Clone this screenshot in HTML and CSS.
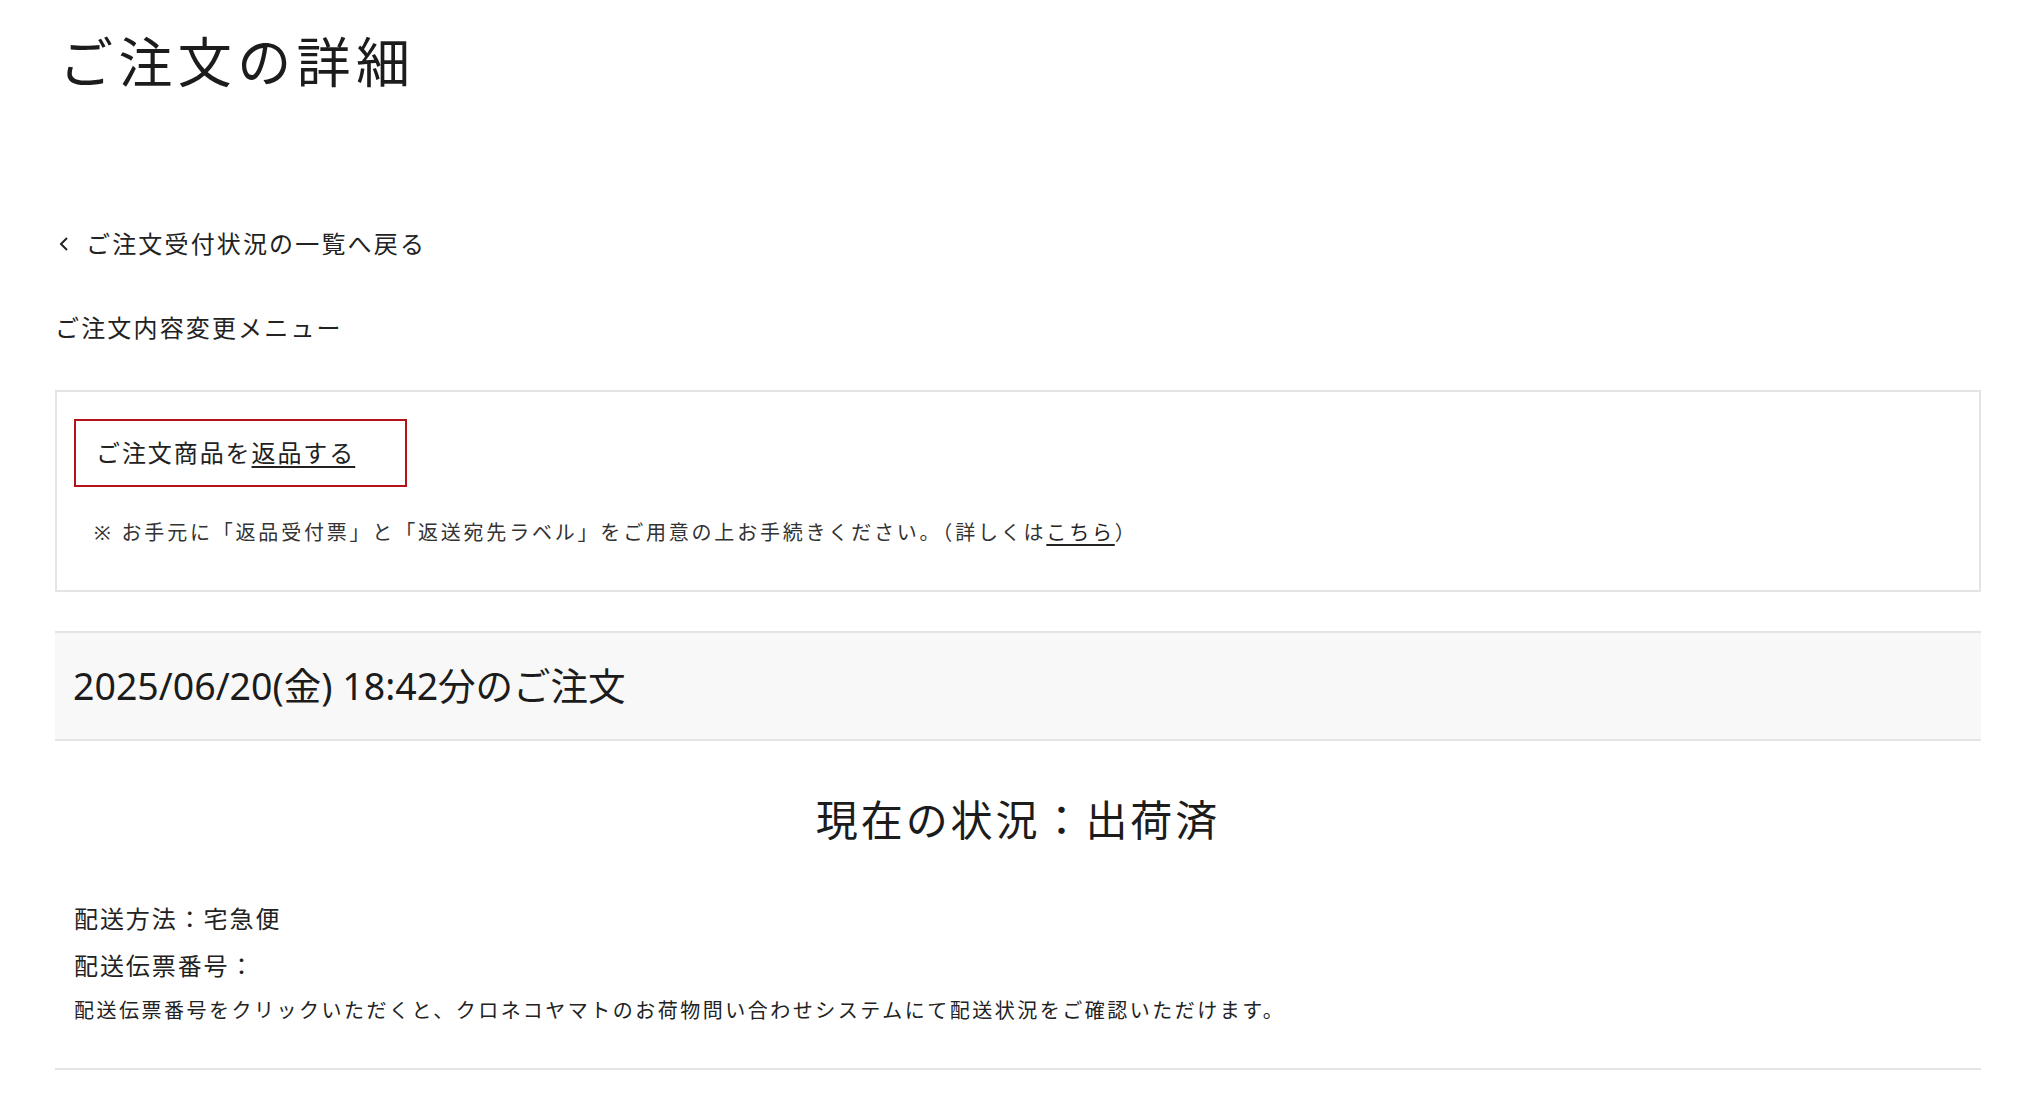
FILE: index.html
```html
<!DOCTYPE html>
<html lang="ja">
<head>
<meta charset="utf-8">
<title>ご注文の詳細</title>
<link rel="stylesheet" href="styles.css">
</head>
<body>
<main class="page">
  <h1 class="page-title">ご注文の詳細</h1>

  <a class="back-link" href="#">
    <svg class="back-icon" width="12" height="18" viewBox="0 0 12 18" aria-hidden="true"><polyline points="9,3 3,9 9,15" fill="none" stroke="#222" stroke-width="2"/></svg>
    <span>ご注文受付状況の一覧へ戻る</span>
  </a>

  <p class="menu-label">ご注文内容変更メニュー</p>

  <section class="change-box">
    <div class="return-btn">ご注文商品を<a href="#">返品する</a></div>
    <p class="note">※ お手元に「返品受付票」と「返送宛先ラベル」をご用意の上お手続きください。（詳しくは<a href="#">こちら</a>）</p>
  </section>

  <h2 class="order-head">2025/06/20(金) 18:42分のご注文</h2>

  <p class="status">現在の状況：出荷済</p>

  <div class="shipping">
    <p class="ship-line">配送方法：宅急便</p>
    <p class="ship-line second">配送伝票番号：</p>
    <p class="ship-note">配送伝票番号をクリックいただくと、クロネコヤマトのお荷物問い合わせシステムにて配送状況をご確認いただけます。</p>
  </div>

  <hr class="divider">
</main>
</body>
</html>
```

FILE: styles.css
```css
* { box-sizing: border-box; }

html, body {
  margin: 0;
  padding: 0;
  background: #ffffff;
}

body {
  font-family: "Noto Sans", "Noto Sans CJK JP", sans-serif;
  color: #222222;
}

.page {
  display: flex;
  flex-direction: column;
  padding: 0 53px 0 55px;
}

.page-title {
  margin: 22px 0 0 4px;
  font-size: 54px;
  line-height: 81px;
  font-weight: 400;
  letter-spacing: 0.1em;
  color: #1c1c1c;
}

.back-link {
  display: flex;
  align-items: center;
  gap: 16px;
  margin-top: 123px;
  margin-left: 3px;
  font-size: 24px;
  line-height: 36px;
  letter-spacing: 0.09em;
  color: #222222;
  text-decoration: none;
}

.back-icon { display: block; }

.menu-label {
  margin: 48px 0 0 0;
  font-size: 24px;
  line-height: 36px;
  letter-spacing: 0.09em;
}

.change-box {
  margin-top: 44px;
  border: 2px solid #e4e4e4;
  padding: 27px 17px 41px 17px;
}

.return-btn {
  width: 333px;
  border: 2px solid #b3121a;
  padding: 14px 0 14px 20px;
  font-size: 24px;
  line-height: 36px;
  letter-spacing: 0.08em;
}

.return-btn a,
.note a {
  color: #222222;
  text-decoration: underline;
  text-underline-offset: 4px;
}

.note {
  margin: 30px 0 0 20px;
  font-size: 20px;
  line-height: 32px;
  letter-spacing: 0.14em;
  color: #333333;
}

.order-head {
  margin: 39px 0 0 0;
  background: #f8f8f8;
  border-top: 2px solid #e4e4e4;
  border-bottom: 2px solid #e4e4e4;
  padding: 25px 18px 26px 18px;
  font-size: 37.5px;
  line-height: 55px;
  font-weight: 400;
  color: #1c1c1c;
}

.status {
  margin: 47px 0 0 0;
  text-align: center;
  font-size: 42px;
  line-height: 63px;
  letter-spacing: 0.07em;
  color: #1c1c1c;
}

.shipping {
  margin-top: 50px;
  padding-left: 19px;
}

.ship-line {
  margin: 0;
  font-size: 24px;
  line-height: 36px;
  letter-spacing: 0.08em;
}

.ship-line.second { margin-top: 11px; }

.ship-note {
  margin: 11px 0 0 0;
  font-size: 20px;
  line-height: 32px;
  letter-spacing: 0.125em;
}

.divider {
  margin: 41px 0 0 0;
  border: 0;
  border-top: 2px solid #e4e4e4;
}
```
